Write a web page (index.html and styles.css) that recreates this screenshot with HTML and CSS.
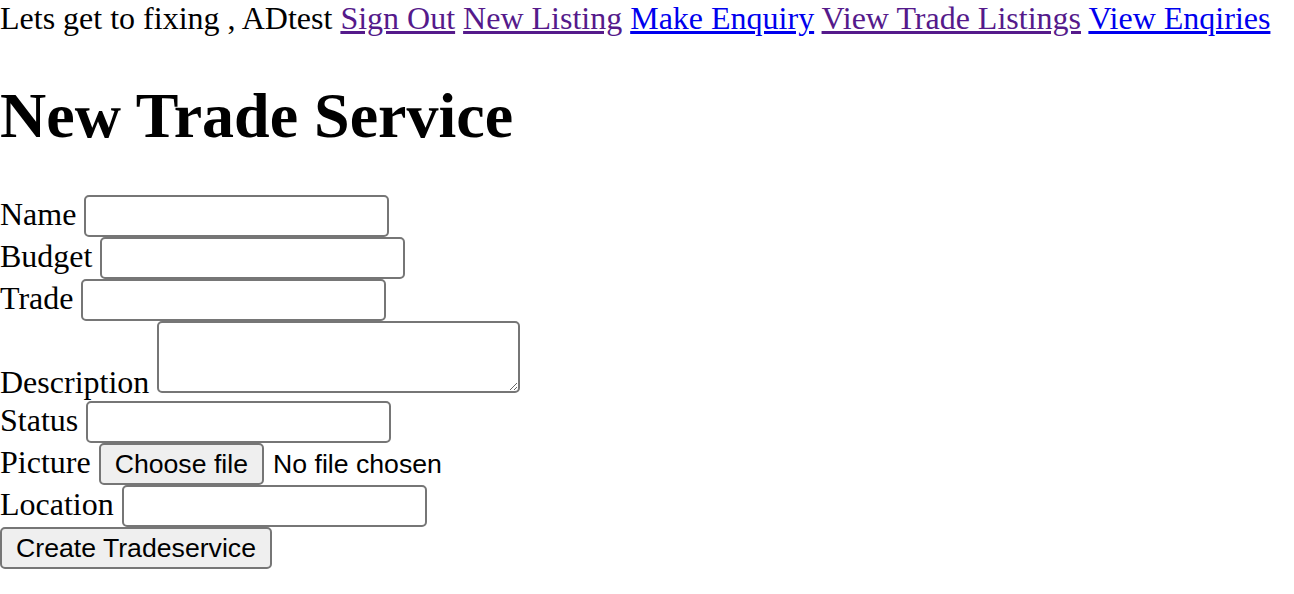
FILE: index.html
```html
<!DOCTYPE html>
<html lang="en">
<head>
<meta charset="utf-8">
<title>New Trade Service</title>
<link rel="stylesheet" href="styles.css">
</head>
<body>
<div class="topbar">Lets get to fixing , ADtest <a class="visited" href="#">Sign Out</a> <a class="visited" href="#">New Listing</a> <a href="#">Make Enquiry</a> <a class="visited" href="#">View Trade Listings</a> <a href="#">View Enqiries</a></div>
<h1 class="title">New Trade Service</h1>
<form class="form">
  <div class="row"><label>Name</label> <input class="field" type="text"></div>
  <div class="row"><label>Budget</label> <input class="field" type="text"></div>
  <div class="row"><label>Trade</label> <input class="field" type="text"></div>
  <div class="row"><label>Description</label> <textarea class="area"></textarea></div>
  <div class="row"><label>Status</label> <input class="field" type="text"></div>
  <div class="row"><label>Picture</label> <button type="button" class="btn">Choose file</button><span class="file-name">No file chosen</span></div>
  <div class="row"><label>Location</label> <input class="field" type="text"></div>
  <div class="row"><button type="submit" class="btn">Create Tradeservice</button></div>
</form>
</body>
</html>
```
FILE: styles.css
```css
html, body {
  margin: 0;
  padding: 0;
  background: #ffffff;
}
body {
  font-family: "Liberation Serif", "Times New Roman", serif;
  font-size: 32px;
  line-height: normal;
  color: #000000;
}
.topbar a {
  color: #0000ee;
}
.topbar a.visited {
  color: #551a8b;
}
.title {
  font-size: 64px;
  font-weight: bold;
  margin: 42px 0 42px;
}
.form {
  margin: 0;
}
.row {
  white-space: nowrap;
}
.field {
  box-sizing: border-box;
  width: 305px;
  height: 42px;
  border: 2px solid #767676;
  border-radius: 5px;
  padding: 3px 4px;
  font-family: "Liberation Sans", Arial, sans-serif;
  font-size: 26.67px;
  background: #ffffff;
  vertical-align: baseline;
  margin: 0;
}
.area {
  box-sizing: border-box;
  width: 363px;
  height: 72px;
  border: 2px solid #767676;
  border-radius: 5px;
  padding: 4px;
  font-family: "Liberation Mono", monospace;
  font-size: 26.67px;
  margin: 0;
  vertical-align: baseline;
}
.btn {
  box-sizing: border-box;
  height: 42px;
  padding: 2px 14px;
  border: 2px solid #767676;
  border-radius: 5px;
  background: #efefef;
  color: #000000;
  font-family: "Liberation Sans", Arial, sans-serif;
  font-size: 26.67px;
  margin: 0;
}
.file-name {
  font-family: "Liberation Sans", Arial, sans-serif;
  font-size: 26.67px;
  margin-left: 9px;
}
```
